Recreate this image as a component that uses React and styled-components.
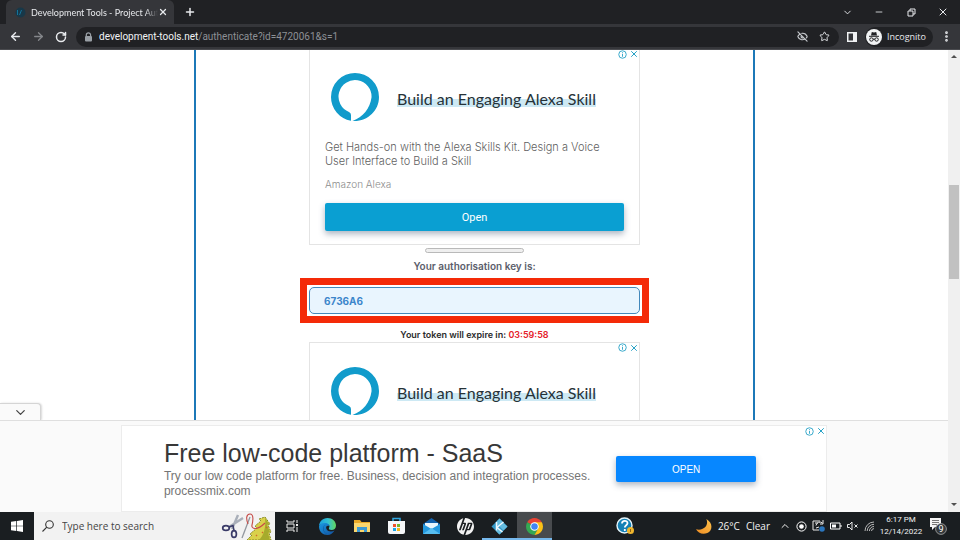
import React from "react";
import styled, { createGlobalStyle, css } from "styled-components";
import { ArrowLeft, ArrowRight, RotateCw, Star, EyeOff, X, Plus, ChevronDown, ChevronUp, Minus, MoreVertical } from "lucide-react";
import { SiHp } from "react-icons/si";

const GlobalStyle = createGlobalStyle`
  * { box-sizing: border-box; }
  html, body, #root { height: 100%; margin: 0; }
  body { overflow: hidden; font-family: "Open Sans", "Noto Sans", sans-serif; font-size: 10px; background: #fff; }
  button, input { font: inherit; margin: 0; }
  button { border: 0; padding: 0; background: none; color: inherit; }
  h2, p { margin: 0; }
  svg { display: block; flex: none; }
`;

const Screen = styled.div`
  height: 100vh;
  display: flex;
  flex-direction: column;
`;

/* Browser chrome */

const TabStrip = styled.header`
  height: 24px;
  flex: none;
  display: flex;
  align-items: center;
  padding-left: 6px;
  background: #202124;
  color: #e8eaed;
`;

const Tab = styled.div`
  width: 168px;
  height: 24px;
  display: flex;
  align-items: center;
  gap: 4px;
  padding: 0 6px 0 8px;
  border-radius: 6px 6px 0 0;
  background: #35363a;
`;

const TabTitle = styled.span`
  flex: 1;
  min-width: 0;
  white-space: nowrap;
  font-family: Lato, sans-serif;
  font-size: 9px;
  margin-right: -4px;
  mask-image: linear-gradient(to right, #000 90%, transparent);
`;

const IconButton = styled.button`
  display: grid;
  place-items: center;
  width: ${(p) => p.$w || 16}px;
  height: 20px;
  flex: none;
  color: ${(p) => p.$color || "#e8eaed"};
`;

const NewTab = styled(IconButton)`
  margin-left: 8px;
`;

const WindowControls = styled.div`
  margin-left: auto;
  display: flex;
  gap: 16px;
  padding-right: 9px;
`;

const Toolbar = styled.nav`
  height: 26px;
  flex: none;
  display: flex;
  align-items: center;
  gap: 7px;
  padding: 0 10px 0 7px;
  background: #35363a;
  color: #e8eaed;
  border-bottom: 1px solid #4a4b4f;
`;

const AddressBar = styled.div`
  flex: 1;
  min-width: 0;
  height: 20px;
  display: flex;
  align-items: center;
  gap: 6px;
  padding: 0 6px 0 8px;
  border-radius: 10px;
  background: #202124;
`;

const Url = styled.div`
  flex: 1;
  min-width: 0;
  overflow: hidden;
  white-space: nowrap;
  font-family: Roboto, sans-serif;
  font-size: 10px;
  line-height: 16px;
  color: #8d9095;
`;

const Host = styled.span`
  color: #f1f3f4;
`;

const Incognito = styled.button`
  height: 20px;
  display: flex;
  align-items: center;
  gap: 5px;
  padding: 0 7px 0 1px;
  border-radius: 10px;
  background: #202124;
  font-size: 9px;
`;

/* Web page */

const Viewport = styled.div`
  flex: 1;
  min-height: 0;
  display: flex;
`;

const Page = styled.div`
  flex: 1;
  min-width: 0;
  display: flex;
  flex-direction: column;
`;

const Content = styled.main`
  flex: 1;
  min-height: 0;
  overflow: hidden;
  position: relative;
  padding-left: 1px;
`;

const Column = styled.section`
  width: 59.2%;
  height: 100%;
  margin: 0 auto;
  display: flex;
  flex-direction: column;
  align-items: center;
  border: solid #1c78b8;
  border-width: 0 2px;
`;

const Card = styled.article`
  width: 331px;
  max-width: 100%;
  flex: none;
  padding: 0 15px 13px;
  border: solid #e4e4e4;
  border-width: ${(p) => (p.$first ? "0 1px 1px" : "1px 1px 0")};
  ${(p) =>
    !p.$first &&
    css`
      flex: 1;
      padding-bottom: 0;
    `}
`;

const AdChoices = styled.div`
  height: ${(p) => p.$h || 10}px;
  display: flex;
  justify-content: flex-end;
  align-items: center;
  gap: 2px;
  margin-right: -15px;
  color: #27a2c6;
`;

const AdHead = styled.div`
  height: 82px;
  display: flex;
  align-items: center;
  gap: 18px;
  padding: 0 0 4px 6px;
`;

const AdTitle = styled.h2`
  font-family: Lato, sans-serif;
  font-size: 16px;
  line-height: 16px;
  font-weight: 400;
  color: #263238;
  margin-top: 4px;
  white-space: nowrap;
  background: linear-gradient(transparent 8px, #cde9f4 8px);
`;

const AdText = styled.p`
  font-family: Inter, sans-serif;
  font-size: 11px;
  font-weight: 300;
  line-height: 14px;
  color: #5f5f5f;
`;

const Advertiser = styled(AdText)`
  margin-top: 9px;
  font-size: 10px;
  color: #8c8c8c;
`;

const ActionButton = styled.button`
  border-radius: 2px;
  background: ${(p) => (p.$bright ? "#0787ff" : "#0a9fd2")};
  color: #fff;
  font-family: ${(p) => (p.$bright ? '"Liberation Sans"' : "Roboto")}, sans-serif;
  font-size: ${(p) => (p.$bright ? 10 : 11)}px;
  width: ${(p) => (p.$bright ? "140px" : "100%")};
  height: ${(p) => (p.$bright ? 26 : 28)}px;
  margin-top: ${(p) => (p.$bright ? 0 : 12)}px;
  flex: none;
  box-shadow: 0 3px 6px rgba(70, 90, 120, 0.45);
`;

const Handle = styled.div`
  width: 99px;
  height: 5px;
  flex: none;
  margin: 3px 0 5px;
  border: 1px solid #b9b9b9;
  border-radius: 3px;
  background: #efefef;
`;

const KeyLabel = styled.label`
  font-family: Inter, sans-serif;
  font-size: 10px;
  line-height: 16px;
  font-weight: 600;
  color: #5b5e6b;
`;

const KeyFrame = styled.div`
  width: 349px;
  max-width: 100%;
  flex: none;
  margin-top: 4px;
  padding: 2px;
  border: 7px solid #f42a08;
`;

const KeyInput = styled.input`
  display: block;
  width: 100%;
  height: 27px;
  padding: 0 14px;
  border: 1px solid #4388bb;
  border-radius: 5px;
  background: #e9f5fe;
  color: #3c86cb;
  font-family: Inter, sans-serif;
  font-size: 10px;
  font-weight: 700;
  outline: 0;
`;

const Expiry = styled.p`
  margin-top: 4px;
  font-family: Inter, sans-serif;
  font-size: 9px;
  line-height: 15px;
  font-weight: 600;
  color: #2b2b2b;
`;

const Countdown = styled.span`
  color: #e5202b;
`;

const CollapseTab = styled.button`
  position: absolute;
  left: 0;
  bottom: 0;
  width: 41px;
  height: 17px;
  display: grid;
  place-items: center;
  border: solid #d5d5d5;
  border-width: 1px 1px 0 0;
  border-radius: 0 4px 0 0;
  background: #fafafa;
  color: #444;
  box-shadow: 1px 0 2px rgba(0, 0, 0, 0.15);
`;

const Anchor = styled.aside`
  flex: none;
  padding-top: 4px;
  border-top: 1px solid #dfdfdf;
  background: #fafafa;
`;

const Banner = styled.div`
  width: 74.5%;
  height: 87px;
  margin: 0 auto;
  padding-left: 42px;
  display: grid;
  grid-template-columns: 1fr 140px 70px;
  background: #fff;
  border: 1px solid #ececec;
`;

const BannerCopy = styled.div`
  padding-top: 11px;
  font-family: "Liberation Sans", sans-serif;
  white-space: nowrap;
`;

const BannerTitle = styled.h2`
  font-size: 25px;
  line-height: 32px;
  font-weight: 400;
  color: #383838;
`;

const BannerText = styled.p`
  font-size: 12px;
  line-height: 15px;
  color: #757575;
`;

const BannerAction = styled.div`
  padding-top: 30px;
`;

const BannerChoices = styled(AdChoices)`
  margin-right: 0;
`;

const Scrollbar = styled.div`
  width: 12px;
  flex: none;
  display: flex;
  flex-direction: column;
  align-items: center;
  padding: 5px 1px;
  background: #f0f0f0;
`;

const Thumb = styled.div`
  width: 10px;
  height: 94px;
  background: #c1c1c1;
`;

const Track = styled.div`
  flex: ${(p) => p.$part} 1 0;
`;

/* Taskbar */

const Taskbar = styled.footer`
  height: 28px;
  flex: none;
  display: flex;
  align-items: stretch;
  background: #1a1e21;
  color: #f2f2f2;
`;

const TaskButton = styled.button`
  width: ${(p) => p.$w || 34}px;
  flex: none;
  display: grid;
  place-items: center;
  border: solid transparent;
  border-width: 2px 0;
  ${(p) =>
    p.$open &&
    css`
      border-bottom-color: #76b9ed;
    `}
  background: ${(p) => (p.$active ? "#484b4e" : "transparent")};
`;

const Search = styled.label`
  width: 241px;
  flex: none;
  display: flex;
  align-items: center;
  gap: 8px;
  padding-left: 8px;
  background: #f2f2f2;
  color: #333;
`;

const SearchInput = styled.input`
  flex: 1;
  min-width: 0;
  border: 0;
  padding: 0;
  outline: 0;
  background: none;
  font-family: "Open Sans", sans-serif;
  font-size: 10px;
  &::placeholder { color: #444; opacity: 1; }
`;

const Apps = styled.div`
  display: flex;
`;

const Tray = styled.div`
  flex: 1;
  display: flex;
  align-items: center;
  padding: 0 13px 0 56px;
`;

const Weather = styled.button`
  display: flex;
  align-items: center;
  gap: 6px;
  margin: 0 9px 0 auto;
  font-size: 10px;
  white-space: nowrap;
`;

const TrayIcons = styled.div`
  display: flex;
  align-items: center;
  gap: 5px;
`;

const Clock = styled.div`
  width: 44px;
  margin: 0 6px 0 4px;
  text-align: center;
  font-family: Roboto, sans-serif;
  font-size: 8px;
  line-height: 12px;
`;

/* Drawings */

const Choices = ({ as: Box = AdChoices, h }) => (
  <Box $h={h}>
    <svg width="9" height="9" viewBox="0 0 18 18" fill="none" stroke="currentColor" strokeWidth="1.8">
      <circle cx="9" cy="9" r="7.5" />
      <path d="M9 8v5.5M9 4.5v2" />
    </svg>
    <X size={10} strokeWidth={2.4} />
  </Box>
);

const AlexaLogo = () => (
  <svg width="48" height="49" viewBox="0 0 48 49">
    <path fill="#119bcb" fillRule="evenodd" d="M24 0A24 24 0 0 0 0 24A24 24 0 0 0 20 47.700V42q0-1.800-2-3A16.500 16.500 0 1 1 40.500 24.600C39 35.500 32 44.500 21.500 48C36 49 48 38 48 24A24 24 0 0 0 24 0Z" />
  </svg>
);

const Lock = () => (
  <svg width="9" height="10" viewBox="0 0 9 10">
    <path d="M2.300 4V3a2.100 2.100 0 0 1 4.300 0v1" fill="none" stroke="#9aa0a6" strokeWidth="1.2" />
    <rect x="1" y="4" width="7" height="5.500" rx="1" fill="#9aa0a6" />
  </svg>
);

const Favicon = () => (
  <svg width="13" height="13" viewBox="0 0 13 13">
    <circle cx="6.500" cy="6.500" r="5" fill="#173849" />
    <path d="M7.500 4 5.500 9M3.500 4v5" stroke="#147299" />
  </svg>
);

const Restore = () => (
  <svg width="9" height="9" viewBox="0 0 9 9" fill="none" stroke="currentColor">
    <path d="M1 3h5v5H1zM3 3V1h5v5H6" />
  </svg>
);

const SidePanel = () => (
  <svg width="10" height="10" viewBox="0 0 10 10">
    <path fill="#f1f3f4" fillRule="evenodd" d="M0 0h10v10H0zM1.500 1.500v7H6v-7z" />
  </svg>
);

const IncognitoMark = () => (
  <svg width="16" height="16" viewBox="0 0 16 16">
    <circle cx="8" cy="8" r="8" fill="#f1f3f4" />
    <path d="M5 6.500 5.800 3q2.200.8 4.400 0L11 6.500z" fill="#202124" />
    <path d="M3 7.300h10M7 10.300q1-.6 2 0" stroke="#202124" fill="none" />
    <circle cx="5.400" cy="10.500" r="1.700" fill="none" stroke="#202124" />
    <circle cx="10.600" cy="10.500" r="1.700" fill="none" stroke="#202124" />
  </svg>
);

const Windows = () => (
  <svg width="12" height="12" viewBox="0 0 12 12" fill="#fff">
    <path d="M0 1.700 5.300 1v4.700H0zM6 .9 12 0v5.700H6zM0 6.300h5.300V11L0 10.300zM6 6.300h6V12l-6-.9z" />
  </svg>
);

const Magnifier = () => (
  <svg width="12" height="12" viewBox="0 0 12 12" fill="none" stroke="#333" strokeWidth="1.100">
    <circle cx="7.500" cy="4.500" r="3.800" />
    <path d="M4.800 7.200.5 11.500" />
  </svg>
);

const HolidayArt = () => (
  <svg width="54" height="28" viewBox="0 0 54 28" fill="none">
    <path d="M17 3 11 17M22 6 8 15" stroke="#a9afb9" strokeWidth="2.400" />
    <ellipse cx="5" cy="16" rx="3.300" ry="2.400" stroke="#3a3b68" strokeWidth="1.700" />
    <ellipse cx="13" cy="22" rx="2.400" ry="3.400" stroke="#3a3b68" strokeWidth="1.700" />
    <path d="m8 15 4-1.500 1 5" stroke="#3a3b68" strokeWidth="1.500" />
    <path d="M29 5 21 26" stroke="#92979f" strokeWidth="1.300" />
    <path d="M44 5l5 7-2 1 3 7-2 1 2 7H26l5-5-2-1 7-6-2-2 6-5-2-2z" fill="#d9d04a" stroke="#858a26" strokeDasharray="2 1" />
    <path d="M44 6l4 6-2 1 3 7-2 1 2 7H38c5-5 7-13 6-22Z" fill="#a6ab2c" />
    <path d="M27 12c-2-5-2-10 2-10s3 7 2 11 5 6 13-2" stroke="#c64b47" strokeWidth="1.100" />
    <path d="M35 23l1 1M41 20l1 1M45 15l1 1" stroke="#d06a2c" strokeWidth="1.400" />
  </svg>
);

const TaskView = () => (
  <svg width="13" height="12" viewBox="0 0 13 12" fill="none" stroke="#eee">
    <path d="M1 0v2h7V0M1 12v-2h7v2M1 4h7v4H1zM11 0v3M11 7v5" />
    <path d="M10 5h2" strokeWidth="2" />
  </svg>
);

const Edge = () => (
  <svg width="17" height="17" viewBox="0 0 34 34">
    <defs>
      <linearGradient id="edgeTop" x1="0" x2="1"><stop stopColor="#199fe0" /><stop offset=".55" stopColor="#35c1d0" /><stop offset="1" stopColor="#62d75c" /></linearGradient>
      <linearGradient id="edgeLow" x1="0" y1="0" x2="1" y2="1"><stop stopColor="#1a9be6" /><stop offset="1" stopColor="#124f9c" /></linearGradient>
    </defs>
    <path fill="url(#edgeLow)" d="M0 17C2 10 9 8 14 9c5 1 7 4 7 7-6-2-8 2-6 6 3 6 11 6 16 3-3 5-8 9-14 9C8 34 0 27 0 17Z" />
    <path fill="url(#edgeTop)" d="M0 17C0 8 7 0 17 0s17 7 17 15c0 6-4 9-9 9-4 0-6-2-5-4 3-5-1-10-8-10C5 10 1 14 0 17Z" />
    <path fill="#0b4b91" d="M13 13c-7 5-5 16 5 20C8 30 4 18 13 13Z" />
  </svg>
);

const Folder = () => (
  <svg width="16" height="14" viewBox="0 0 16 14">
    <path d="M0 1h6l1.500 2H16v10H0z" fill="#e9a928" />
    <path d="M0 4h16v9H0z" fill="#fbd76e" />
    <path d="M3 13V8h10v5h-3v-2H6v2z" fill="#3e9bd3" />
  </svg>
);

const Store = () => (
  <svg width="17" height="18" viewBox="0 0 17 18">
    <path d="M5 5V1.500h7V5" fill="none" stroke="#30a8e2" strokeWidth="1.500" />
    <path d="M0 4h17v11q0 2-2 2H2q-2 0-2-2z" fill="#f5f7f9" />
    <path d="M5 7h3v3H5z" fill="#f1512c" /><path d="M9 7h3v3H9z" fill="#78b62c" />
    <path d="M5 11h3v3H5z" fill="#1ba4e4" /><path d="M9 11h3v3H9z" fill="#f6b719" />
  </svg>
);

const Mail = () => (
  <svg width="17" height="16" viewBox="0 0 17 16">
    <path d="m0 6 8.500-6L17 6v3H0z" fill="#1261ad" />
    <path d="M2 5h13v6H2z" fill="#e9f6fd" />
    <path d="m0 6 8.500 5L17 6v10H0z" fill="#2499df" />
    <path d="m0 16 8.500-6 8.500 6z" fill="#56bdf0" />
  </svg>
);

const KodiDiamond = () => (
  <svg width="17" height="17" viewBox="0 0 34 34">
    <path d="m17 1 16 16-16 16L1 17z" fill="#3599c9" />
    <path d="m17 1 7 7-13 14V7zM25 10l8 7-8 8-8-8zM15 20l8 7-6 6-7-7z" fill="#65bce0" />
    <path d="M11 8v17M25 8 12 19l11 9" fill="none" stroke="#eef9ff" strokeWidth="3" />
  </svg>
);

const Chrome = () => (
  <svg width="17" height="17" viewBox="0 0 34 34">
    <path d="M17 17 2.300 8.500a17 17 0 0 1 29.400 0z" fill="#e94335" />
    <path d="M17 17 2.300 8.500A17 17 0 0 0 17 34l7.400-12.800z" fill="#34a853" />
    <path d="M17 17V8.500h14.700A17 17 0 0 1 17 34l7.400-12.800z" fill="#fbc116" />
    <circle cx="17" cy="17" r="8.500" fill="#fff" />
    <circle cx="17" cy="17" r="6.500" fill="#4285f4" />
  </svg>
);

const Help = () => (
  <svg width="18" height="18" viewBox="0 0 18 18">
    <circle cx="8.500" cy="8.500" r="7.500" fill="#1581b5" stroke="#e6f6fc" strokeWidth="1.400" />
    <path d="M6 6.500C6 3 11.500 3 11.500 6.200c0 2-2.700 2-2.700 4.300M8.800 12v2" fill="none" stroke="#fff" strokeWidth="1.800" />
    <circle cx="14.500" cy="13.500" r="3.500" fill="#efb62e" />
    <path d="M14.500 12v3" stroke="#8a6118" />
  </svg>
);

const Moon = () => (
  <svg width="16" height="16" viewBox="0 0 17 17">
    <defs><linearGradient id="moon" x1="1" y1="0" x2="0" y2="1"><stop stopColor="#ffc34c" /><stop offset="1" stopColor="#ed8b22" /></linearGradient></defs>
    <path d="M11 1c7 4 7 12 1 15-5 2-10 0-12-4 8 2 14-4 11-11Z" fill="url(#moon)" />
  </svg>
);

const Record = () => (
  <svg width="11" height="11" viewBox="0 0 11 11"><circle cx="5.500" cy="5.500" r="4.600" fill="none" stroke="#fff" /><circle cx="5.500" cy="5.500" r="2.300" fill="#fff" /></svg>
);

const Sync = () => (
  <svg width="13" height="12" viewBox="0 0 13 12" fill="none" stroke="#e9e9e9">
    <path d="M8 1H1v9h6M3 3h3M11 0v4H8M10.500 3A4 4 0 0 0 4 5.500M4 8l3-1" />
    <circle cx="10" cy="9" r="2.800" fill="#2b76bd" stroke="none" />
  </svg>
);

const Battery = () => (
  <svg width="12" height="8" viewBox="0 0 12 8"><path d="M.5 1h9.500v6H.5zM11 3v2" fill="none" stroke="#fff" /><path d="M2 2.500h4v3H2z" fill="#fff" /></svg>
);

const Muted = () => (
  <svg width="12" height="10" viewBox="0 0 12 10" fill="none" stroke="#fff" strokeWidth=".9"><path d="M.5 3.500h2L5 1v8L2.500 6.500h-2zM7.500 3.500l3 3M10.500 3.500l-3 3" /></svg>
);

const Wifi = () => (
  <svg width="11" height="11" viewBox="0 0 11 11" fill="none" stroke="#c6c6c6" strokeWidth=".9">
    <path d="M1 10A9 9 0 0 1 10 1M3.200 10A6.800 6.800 0 0 1 10 3.300M5.400 10A4.600 4.600 0 0 1 10 5.500M7.500 10A2.500 2.500 0 0 1 10 7.600" />
  </svg>
);

const Notice = () => (
  <svg width="18" height="18" viewBox="0 0 18 18">
    <path d="M1 1h11v9H6l-3 3v-3H1z" fill="#f5f5f5" />
    <path d="M3 3.500h7M3 5.500h7M3 7.500h5" stroke="#555" strokeWidth=".8" />
    <circle cx="12" cy="12" r="5.400" fill="#34383b" stroke="#aaa" strokeWidth=".8" />
    <text x="12" y="15" textAnchor="middle" fill="#fff" fontSize="9" fontFamily="Roboto, sans-serif">9</text>
  </svg>
);

const Arrow = ({ down }) => (
  <svg width="6" height="4" viewBox="0 0 6 4"><path d={down ? "M0 0h6L3 3z" : "M3 0 6 3H0z"} fill="#505050" /></svg>
);

function AlexaCard({ first }) {
  return (
    <Card $first={first}>
      <Choices h={first ? 8 : 9} />
      <AdHead>
        <AlexaLogo />
        <AdTitle>Build an Engaging Alexa Skill</AdTitle>
      </AdHead>
      {first && (
        <>
          <AdText>Get Hands-on with the Alexa Skills Kit. Design a Voice User Interface to Build a Skill</AdText>
          <Advertiser>Amazon Alexa</Advertiser>
          <ActionButton>Open</ActionButton>
        </>
      )}
    </Card>
  );
}

export default function App() {
  return (
    <Screen>
      <GlobalStyle />
      <TabStrip>
        <Tab>
          <Favicon />
          <TabTitle>Development Tools - Project Auth</TabTitle>
          <IconButton $w={10} aria-label="Close tab"><X size={10} strokeWidth={3} /></IconButton>
        </Tab>
        <NewTab aria-label="New tab"><Plus size={12} strokeWidth={3} /></NewTab>
        <WindowControls>
          <IconButton aria-label="Search tabs"><ChevronDown size={11} /></IconButton>
          <IconButton aria-label="Minimize"><Minus size={10} /></IconButton>
          <IconButton aria-label="Restore"><Restore /></IconButton>
          <IconButton aria-label="Close"><X size={12} /></IconButton>
        </WindowControls>
      </TabStrip>
      <Toolbar>
        <IconButton aria-label="Back"><ArrowLeft size={13} strokeWidth={2.6} /></IconButton>
        <IconButton aria-label="Forward" $color="#85878b"><ArrowRight size={13} strokeWidth={2.4} /></IconButton>
        <IconButton aria-label="Reload"><RotateCw size={12} strokeWidth={3} /></IconButton>
        <AddressBar>
          <Lock />
          <Url><Host>development-tools.net</Host>/authenticate?id=4720061&amp;s=1</Url>
          <IconButton aria-label="Tracking blocked" $color="#c4c7cb"><EyeOff size={11} strokeWidth={2.6} /></IconButton>
          <IconButton aria-label="Bookmark"><Star size={11} /></IconButton>
        </AddressBar>
        <IconButton $w={12} aria-label="Side panel"><SidePanel /></IconButton>
        <Incognito><IncognitoMark />Incognito</Incognito>
        <IconButton $w={10} aria-label="Menu"><MoreVertical size={13} strokeWidth={3} /></IconButton>
      </Toolbar>

      <Viewport>
        <Page>
          <Content>
            <Column>
              <AlexaCard first />
              <Handle />
              <KeyLabel htmlFor="key">Your authorisation key is:</KeyLabel>
              <KeyFrame><KeyInput id="key" readOnly value="6736A6" /></KeyFrame>
              <Expiry>Your token will expire in: <Countdown>03:59:58</Countdown></Expiry>
              <AlexaCard />
            </Column>
            <CollapseTab aria-label="Hide advertisement"><ChevronDown size={15} /></CollapseTab>
          </Content>
          <Anchor>
            <Banner>
              <BannerCopy>
                <BannerTitle>Free low-code platform - SaaS</BannerTitle>
                <BannerText>Try our low code platform for free. Business, decision and integration processes.</BannerText>
                <BannerText>processmix.com</BannerText>
              </BannerCopy>
              <BannerAction><ActionButton $bright>OPEN</ActionButton></BannerAction>
              <Choices as={BannerChoices} h={10} />
            </Banner>
          </Anchor>
        </Page>
        <Scrollbar>
          <Arrow />
          <Track $part={126} />
          <Thumb />
          <Track $part={224} />
          <Arrow down />
        </Scrollbar>
      </Viewport>

      <Taskbar>
        <TaskButton aria-label="Start"><Windows /></TaskButton>
        <Search>
          <Magnifier />
          <SearchInput placeholder="Type here to search" aria-label="Type here to search" />
          <HolidayArt />
        </Search>
        <Apps>
          <TaskButton aria-label="Task view"><TaskView /></TaskButton>
          <TaskButton aria-label="Edge" $w={36}><Edge /></TaskButton>
          <TaskButton aria-label="File Explorer"><Folder /></TaskButton>
          <TaskButton aria-label="Store" $w={35}><Store /></TaskButton>
          <TaskButton aria-label="Mail"><Mail /></TaskButton>
          <TaskButton aria-label="HP"><SiHp size={17} /></TaskButton>
          <TaskButton aria-label="Kodi" $w={35} $open><KodiDiamond /></TaskButton>
          <TaskButton aria-label="Chrome" $w={35} $open $active><Chrome /></TaskButton>
        </Apps>
        <Tray>
          <TaskButton aria-label="Help"><Help /></TaskButton>
          <Weather><Moon /><span>26°C</span><span>Clear</span></Weather>
          <TrayIcons>
            <ChevronUp size={12} /><Record /><Sync /><Battery /><Muted /><Wifi />
          </TrayIcons>
          <Clock>6:17 PM<br />12/14/2022</Clock>
          <Notice />
        </Tray>
      </Taskbar>
    </Screen>
  );
}
